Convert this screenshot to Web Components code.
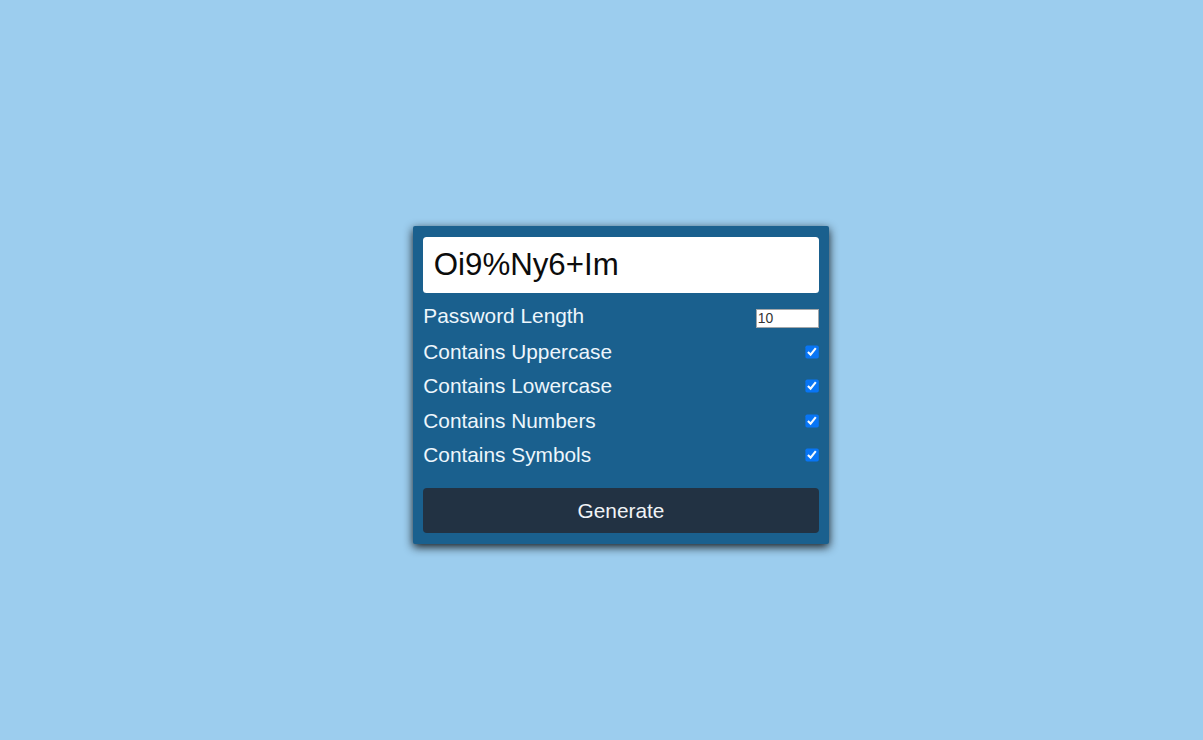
<!DOCTYPE html>
<html lang="en">
<head>
<meta charset="utf-8">
<title>Password Generator</title>
<style>
html, body { height: 100%; }
body { margin: 0; background: #9ccdee; font-family: "Liberation Sans", Arial, sans-serif; overflow: hidden; }
</style>
</head>
<body>
<password-page></password-page>
<script>
const define = (name, html) => {
  const template = document.createElement('template');
  template.innerHTML = html;
  customElements.define(name, class extends HTMLElement {
    constructor() {
      super();
      this.attachShadow({ mode: 'open' }).append(template.content.cloneNode(true));
    }
  });
};

define('result-field', `
<style>
:host { display: flex; align-items: center; box-sizing: border-box; height: 56.5px; padding: 1px 10px 0 10.5px; background: #fff; border-radius: 3.5px; color: #0c0c0c; font-size: 31.25px; line-height: 36px; }
</style>
<span><slot></slot></span>`);

define('length-box', `
<style>
:host { display: block; box-sizing: border-box; width: 63px; height: 19px; padding-left: 1px; background: #fff; border: 1px solid #a3a7aa; color: #333; font-size: 13.9px; line-height: 17px; }
</style>
<slot></slot>`);

define('check-box', `
<style>
:host { display: block; width: 14px; height: 14px; }
svg { display: block; }
</style>
<svg width="14" height="14" viewBox="0 0 14 14"><rect x=".4" y=".4" width="13.4" height="13.2" rx="1.8" fill="#0875f5"/><path d="M2.9 7.0 5.6 9.6 10.8 3.2" fill="none" stroke="#f4faff" stroke-width="2.1"/></svg>`);

define('option-row', `
<style>
:host { display: flex; justify-content: space-between; align-items: center; height: 34.5px; color: #edf6fc; font-size: 20.83px; line-height: 24px; }
</style>
<span><slot></slot></span><slot name="control"></slot>`);

define('action-button', `
<style>
:host { display: flex; align-items: center; justify-content: center; height: 45px; background: #223243; border-radius: 4px; color: #f0f3f6; font-size: 20.83px; line-height: 24px; }
</style>
<span><slot></slot></span>`);

define('generator-card', `
<style>
:host { display: block; box-sizing: border-box; width: 416.5px; height: 318px; padding: 10.5px 10.5px 0; background: #1a608e; border-radius: 2px; box-shadow: 0 3px 10px rgba(0,0,0,.88); }
.options { padding: 4px 0 15.5px; }
</style>
<slot name="result"></slot>
<div class="options"><slot></slot></div>
<slot name="action"></slot>`);

define('password-page', `
<style>
:host { display: flex; justify-content: center; box-sizing: border-box; height: 740px; padding: 226px 0 0 39px; }
.length { height: 37.5px; }
.length length-box { margin-top: 6px; }
</style>
<generator-card>
  <result-field slot="result">Oi9%Ny6+Im</result-field>
  <option-row class="length">Password Length<length-box slot="control">10</length-box></option-row>
  <option-row>Contains Uppercase<check-box slot="control"></check-box></option-row>
  <option-row>Contains Lowercase<check-box slot="control"></check-box></option-row>
  <option-row>Contains Numbers<check-box slot="control"></check-box></option-row>
  <option-row>Contains Symbols<check-box slot="control"></check-box></option-row>
  <action-button slot="action">Generate</action-button>
</generator-card>`);
</script>
</body>
</html>
